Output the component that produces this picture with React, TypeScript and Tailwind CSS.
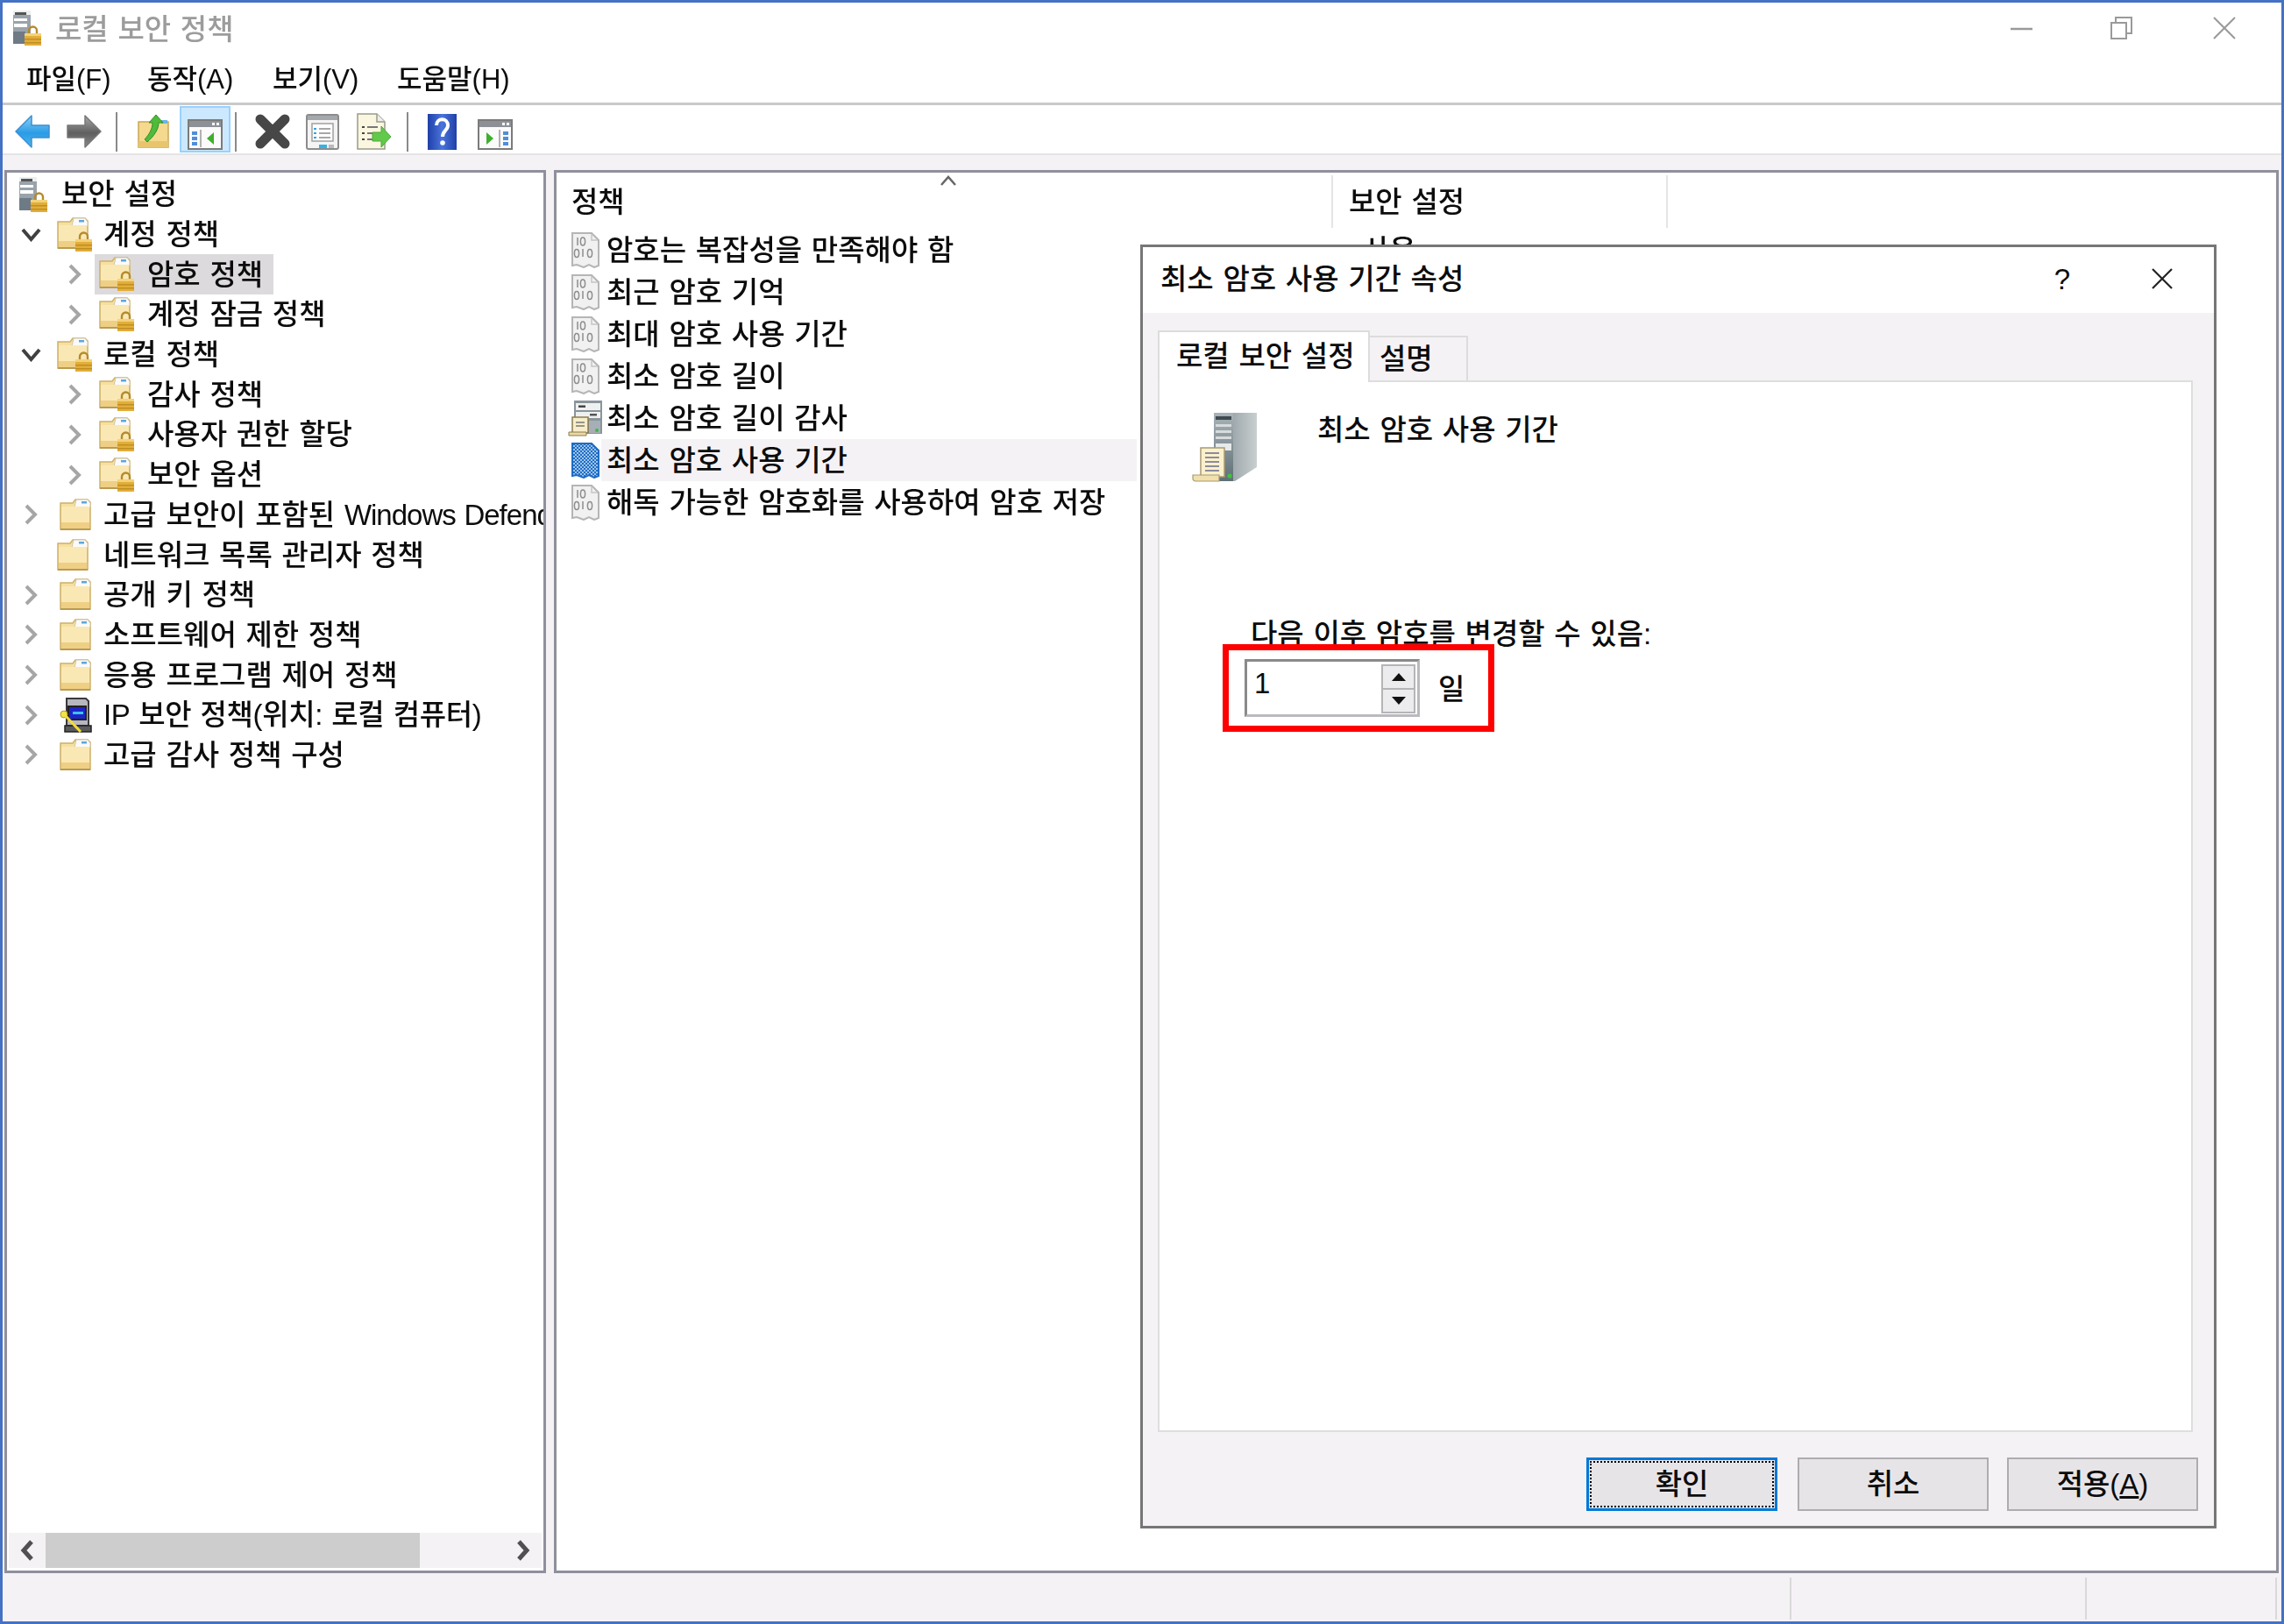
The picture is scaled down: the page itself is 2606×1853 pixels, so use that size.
import React from "react";

function GoldLock({ x, y, s = 1 }: { x: number; y: number; s?: number }) {
  return (
    <g transform={`translate(${x} ${y}) scale(${s})`}>
      <path d="M5 10V6a4.5 4.5 0 0 1 9 0v4" fill="none" stroke="#b58a2a" strokeWidth="2.4" />
      <rect x="0" y="9" width="19" height="14" fill="#e2ae3a" />
      <rect x="0" y="9" width="19" height="3" fill="#f4d27a" />
      <rect x="0" y="15" width="19" height="1.5" fill="#c08d22" />
      <rect x="0" y="19" width="19" height="1.5" fill="#c08d22" />
    </g>
  );
}

function ServerLock() {
  return (
    <svg width="34" height="40" viewBox="0 0 34 40" className="shrink-0">
      <rect x="1" y="0" width="20" height="38" fill="#9aa3ab" />
      <rect x="1" y="0" width="20" height="5" fill="#ecefef" />
      <rect x="3" y="2" width="13" height="3" fill="#555" />
      <rect x="2" y="9" width="15" height="3" fill="#fdfdfd" />
      <rect x="2" y="15" width="15" height="4" fill="#fdfdfd" />
      <rect x="1" y="24" width="14" height="14" fill="#6e7b86" />
      <GoldLock x={14} y={17} />
    </svg>
  );
}

function FolderShape() {
  return (
    <>
      <path d="M1 5h14l3-4h14l3 3v31H1z" fill="#f6e0a0" stroke="#cdb06a" strokeWidth="1.5" />
      <path d="M19 1h13l3 4v5H17z" fill="#fafafa" stroke="#cfc6a8" strokeWidth="1" />
      <rect x="25" y="3" width="6" height="2.5" fill="#5aa7e0" />
      <path d="M2 9h32v26H2z" fill="#fae8b4" />
      <path d="M2 27h32v8H2z" fill="#efcf84" />
      <path d="M1 35h34" stroke="#b89a52" strokeWidth="2" />
    </>
  );
}

function Folder() {
  return (
    <svg width="36" height="37" viewBox="0 0 36 37" className="shrink-0">
      <FolderShape />
    </svg>
  );
}

function FolderLock() {
  return (
    <svg width="41" height="40" viewBox="0 0 41 40" className="shrink-0">
      <FolderShape />
      <GoldLock x={21} y={16} />
    </svg>
  );
}

function BinaryDoc({ active }: { active?: boolean }) {
  const id = "dots";
  return (
    <svg width="36" height="42" viewBox="0 0 36 42" className="shrink-0">
      <defs>
        <pattern id={id} width="4" height="4" patternUnits="userSpaceOnUse">
          <rect width="4" height="4" fill="#1f6cc4" />
          <rect width="2" height="2" fill="#9cc4ec" />
          <rect x="2" y="2" width="2" height="2" fill="#9cc4ec" />
        </pattern>
      </defs>
      <path
        d="M3 2h22l8 8v29l-5 2-6-3-6 3-8-3-5 1z"
        fill={active ? `url(#${id})` : "#f1f1f1"}
        stroke={active ? "#1f6cc4" : "#b5b5b5"}
        strokeWidth="2"
      />
      {!active && (
        <g fill="none" stroke="#8d8d8d" strokeWidth="1.5">
          <path d="M9 7v9" />
          <ellipse cx="15" cy="11.5" rx="2.6" ry="4.5" />
          <ellipse cx="8" cy="25" rx="2.6" ry="4.5" />
          <path d="M15 20v9" />
          <ellipse cx="23" cy="25" rx="2.6" ry="4.5" />
          <path d="M25 3v7h7" stroke="#c5c5c5" />
        </g>
      )}
    </svg>
  );
}

function AuditIcon() {
  return (
    <svg width="40" height="42" viewBox="0 0 40 42" className="shrink-0">
      <rect x="7" y="1" width="32" height="38" fill="#8a949c" />
      <rect x="9" y="4" width="28" height="8" fill="#eef0f0" />
      <rect x="12" y="6.5" width="8" height="2.5" fill="#444" />
      <rect x="9" y="14" width="28" height="7" fill="#eef0f0" />
      <rect x="25" y="16" width="8" height="2.5" fill="#555" />
      <rect x="24" y="24" width="13" height="14" fill="#a6afb5" />
      <circle cx="33" cy="35" r="2" fill="#3fb648" />
      <path d="M5 20h18v18H5z" fill="#f7edc8" stroke="#8a7c4f" strokeWidth="1.5" />
      <path d="M9 26h10M9 30h10" stroke="#777" strokeWidth="1.5" />
      <path d="M1 37h20v4H1z" fill="#ead9a4" stroke="#8a7c4f" strokeWidth="1" />
    </svg>
  );
}

function IpIcon() {
  return (
    <svg width="38" height="40" viewBox="0 0 38 40" className="shrink-0">
      <path d="M8 1h22l3 3v28H8z" fill="#b7b7bf" stroke="#3a3a3a" strokeWidth="2" />
      <rect x="10" y="10" width="20" height="15" fill="#1c24c8" stroke="#222" strokeWidth="2" />
      <rect x="15" y="16" width="12" height="3" fill="#3fc0e8" />
      <path d="M6 32h30v7H6z" fill="#5a5a5a" stroke="#222" strokeWidth="1.5" />
      <circle cx="5" cy="19" r="4" fill="#f4e24a" stroke="#a89a20" />
      <path d="M7 21l17 18" stroke="#f0dc3e" strokeWidth="3" />
    </svg>
  );
}

function LargeServer() {
  return (
    <svg width="76" height="80" viewBox="0 0 76 80" className="shrink-0">
      <defs>
        <linearGradient id="srvSide" x1="0" x2="1" y1="0" y2="0">
          <stop offset="0" stopColor="#7d8a90" />
          <stop offset="1" stopColor="#c9cfd0" />
        </linearGradient>
        <linearGradient id="srvFront" x1="0" x2="0" y1="0" y2="1">
          <stop offset="0" stopColor="#a9b3b8" />
          <stop offset="1" stopColor="#5f6f76" />
        </linearGradient>
      </defs>
      <path d="M25 1h49v62L49 79H25z" fill="url(#srvSide)" />
      <rect x="25" y="1" width="22" height="78" fill="url(#srvFront)" />
      <rect x="27" y="5" width="18" height="4" fill="#3f4a50" />
      <rect x="27" y="14" width="18" height="3" fill="#d6dbdc" />
      <rect x="27" y="21" width="18" height="3" fill="#d6dbdc" />
      <rect x="27" y="28" width="18" height="3" fill="#d6dbdc" />
      <rect x="27" y="36" width="18" height="8" fill="#e7eaea" />
      <circle cx="43" cy="73" r="2.6" fill="#41c23f" />
      <path d="M10 41h27v33H10z" fill="#faf0cc" stroke="#a89a72" strokeWidth="1.5" />
      <path d="M15 47h16M15 52h16M15 57h16M15 62h16M15 67h16" stroke="#8c8c9a" strokeWidth="2" />
      <path d="M1 72h30v7H4a3 3 0 0 1-3-3z" fill="#efe0ad" stroke="#a89a72" strokeWidth="1.2" />
    </svg>
  );
}

function ArrowBack() {
  return (
    <svg width="40" height="38" viewBox="0 0 40 38" className="shrink-0">
      <defs>
        <linearGradient id="blueArrow" x1="0" x2="0" y1="0" y2="1">
          <stop offset="0" stopColor="#8fd0f5" />
          <stop offset="0.55" stopColor="#2a9ce6" />
          <stop offset="1" stopColor="#4fb4ee" />
        </linearGradient>
      </defs>
      <path d="M1 19L19 1v11h20v14H19v11z" fill="url(#blueArrow)" stroke="#3d8fd0" strokeWidth="1.5" strokeLinejoin="round" />
    </svg>
  );
}

function ArrowForward() {
  return (
    <svg width="41" height="38" viewBox="0 0 41 38" className="shrink-0">
      <defs>
        <linearGradient id="grayArrow" x1="0" x2="0" y1="0" y2="1">
          <stop offset="0" stopColor="#a9a9a9" />
          <stop offset="0.55" stopColor="#5f5f5f" />
          <stop offset="1" stopColor="#8a8a8a" />
        </linearGradient>
      </defs>
      <path d="M40 19L22 1v11H2v14h20v11z" fill="url(#grayArrow)" stroke="#777" strokeWidth="1.5" strokeLinejoin="round" />
    </svg>
  );
}

function UpFolder() {
  return (
    <svg width="36" height="38" viewBox="0 0 36 38" className="shrink-0">
      <path d="M1 8h34v29H1z" fill="#f5d98e" stroke="#c9a757" strokeWidth="1.5" />
      <path d="M1 30h34v7H1z" fill="#e8c46c" />
      <path d="M27 6h7v4h-7z" fill="#6eb3e4" />
      <path d="M21 0l8 9h-5c0 8-6 16-13 22l-3-3c5-5 9-12 9-19h-4z" fill="#4fbb3c" stroke="#2f8f27" strokeWidth="1" />
    </svg>
  );
}

function PaneIcon({ flip }: { flip?: boolean }) {
  return (
    <svg width="40" height="35" viewBox="0 0 40 35" className="shrink-0">
      <rect x="1" y="1" width="38" height="33" fill="#fbfbfb" stroke="#7b7b7b" strokeWidth="2" />
      <rect x="2" y="2" width="36" height="7" fill="#8d9197" />
      <rect x="28" y="4" width="3" height="3" fill="#fff" />
      <rect x="33" y="4" width="3" height="3" fill="#fff" />
      {flip ? (
        <>
          <path d="M25 12v20" stroke="#9a9a9a" strokeWidth="1.5" />
          <path d="M10 15l8 7-8 7z" fill="#3fae2e" />
          <path d="M29 14h6v4h-6zM29 20h6v4h-6zM29 26h6v4h-6z" fill="#4f8fd8" />
        </>
      ) : (
        <>
          <path d="M15 12v20" stroke="#9a9a9a" strokeWidth="1.5" />
          <path d="M5 14h6v4H5zM5 20h6v4H5zM5 26h6v4H5z" fill="#4f8fd8" />
          <path d="M30 15l-8 7 8 7z" fill="#3fae2e" />
        </>
      )}
    </svg>
  );
}

function BigX() {
  return (
    <svg width="42" height="42" viewBox="0 0 42 42" className="shrink-0">
      <path d="M7 7l28 28M35 7L7 35" stroke="#474747" strokeWidth="11" strokeLinecap="round" />
    </svg>
  );
}

function PropsIcon() {
  return (
    <svg width="38" height="41" viewBox="0 0 38 41" className="shrink-0">
      <rect x="1" y="1" width="36" height="39" rx="2" fill="#f4f4f4" stroke="#8c8c8c" strokeWidth="2" />
      <rect x="2" y="2" width="34" height="5" fill="#a4a8ad" />
      <rect x="7" y="11" width="24" height="20" fill="#fff" stroke="#a0a0a0" strokeWidth="1.5" />
      <path d="M9 17h3M9 22h3M9 27h3" stroke="#2fa4e6" strokeWidth="2" />
      <path d="M15 17h13M15 22h13M15 27h13" stroke="#8a8a8a" strokeWidth="1.5" />
      <rect x="15" y="35" width="9" height="4" fill="#32b3e8" />
      <rect x="26" y="35" width="6" height="4" fill="#bbbbbb" />
    </svg>
  );
}

function ExportIcon() {
  return (
    <svg width="40" height="42" viewBox="0 0 40 42" className="shrink-0">
      <path d="M1 1h22l9 9v31H1z" fill="#fbf6df" stroke="#9a9a8a" strokeWidth="1.5" />
      <path d="M23 1v9h9" fill="#eee" stroke="#9a9a8a" strokeWidth="1.5" />
      <path d="M6 16h3M6 23h3M6 30h3" stroke="#444" strokeWidth="2" />
      <path d="M12 16h12M12 23h10M12 30h10" stroke="#777" strokeWidth="2" />
      <path d="M39 27L28 15v7H18v10h10v7z" fill="#62c94a" stroke="#4aa93a" strokeWidth="1" />
    </svg>
  );
}

function HelpIcon() {
  return (
    <svg width="33" height="41" viewBox="0 0 33 41" className="shrink-0">
      <defs>
        <linearGradient id="helpBlue" x1="0" x2="1" y1="0" y2="0">
          <stop offset="0" stopColor="#1f3fa8" />
          <stop offset="0.5" stopColor="#4a74dc" />
          <stop offset="1" stopColor="#1f3fa8" />
        </linearGradient>
      </defs>
      <rect width="33" height="41" fill="url(#helpBlue)" />
      <path d="M10 13c0-9 13-9 13 0 0 6-6 6-6 13" fill="none" stroke="#fff" strokeWidth="4" />
      <circle cx="17" cy="33" r="2.8" fill="#fff" />
    </svg>
  );
}

function Chevron({ dir, dark }: { dir: "right" | "down"; dark?: boolean }) {
  if (dir === "down") {
    return (
      <svg width="23" height="16" viewBox="0 0 23 16" className="shrink-0">
        <path d="M2 2l9.5 11L21 2" fill="none" stroke="#404040" strokeWidth="4" />
      </svg>
    );
  }
  return (
    <svg width="15" height="24" viewBox="0 0 15 24" className="shrink-0">
      <path d="M2 2l10 10L2 22" fill="none" stroke={dark ? "#4d4d4d" : "#a6a6a6"} strokeWidth="4" />
    </svg>
  );
}

const L1 = ({ open, lock, label, none, ip }: { open?: boolean; lock?: boolean; label: React.ReactNode; none?: boolean; ip?: boolean }) => (
  <div className="flex h-[45.7px] shrink-0 items-center pl-[16px]">
    <div className="flex w-[23px] shrink-0 justify-center">
      {none ? null : open ? <Chevron dir="down" /> : <Chevron dir="right" />}
    </div>
    <div className={none ? "ml-[18px] flex w-[53px] shrink-0" : lock ? "ml-[18px] flex w-[53px] shrink-0" : "ml-[21px] flex w-[50px] shrink-0"}>
      {lock ? <FolderLock /> : ip ? <IpIcon /> : <Folder />}
    </div>
    <span>{label}</span>
  </div>
);

const L2 = ({ label, selected }: { label: string; selected?: boolean }) => (
  <div className="flex h-[45.7px] shrink-0 items-center pl-[70px]">
    <div className="flex w-[30px] shrink-0">
      <Chevron dir="right" />
    </div>
    <div className={selected ? "flex h-full items-center bg-[#dcdadd] pl-[5px] pr-[12px]" : "flex h-full items-center pl-[5px]"}>
      <FolderLock />
      <span className="ml-[14px]">{label}</span>
    </div>
  </div>
);

const policies = [
  { label: "암호는 복잡성을 만족해야 함" },
  { label: "최근 암호 기억" },
  { label: "최대 암호 사용 기간" },
  { label: "최소 암호 길이" },
  { label: "최소 암호 길이 감사", audit: true },
  { label: "최소 암호 사용 기간", active: true },
  { label: "해독 가능한 암호화를 사용하여 암호 저장" },
];

export default function App() {
  return (
    <div className="relative h-[1853px] w-[2606px] overflow-hidden border-[3px] border-[#4472c4] bg-white">
      <div className="relative flex h-full w-full flex-col font-['Liberation_Sans','Noto_Sans_CJK_KR',sans-serif] text-[33px] font-medium leading-none text-[#0c0c0c] blur-[0.5px] [word-spacing:1.5px]">
        {/* title bar */}
        <div className="flex h-[66px] shrink-0 items-center pb-[8px] pl-[11px]">
          <ServerLock />
          <span className="ml-[15px] mt-[2px] text-[#9c9c9c]">로컬 보안 정책</span>
          <div className="ml-auto flex items-center pr-[52px]">
            <svg width="25" height="25" viewBox="0 0 25 25"><path d="M0 13h25" stroke="#9a9a9a" strokeWidth="2.5" /></svg>
            <svg width="25" height="26" viewBox="0 0 25 26" className="ml-[89px]"><path d="M1 7h17v18H1zM6 7V1h18v18h-6" fill="none" stroke="#9a9a9a" strokeWidth="2" /></svg>
            <svg width="26" height="26" viewBox="0 0 26 26" className="ml-[92px]"><path d="M1 1l24 24M25 1L1 25" stroke="#9a9a9a" strokeWidth="2" /></svg>
          </div>
        </div>
        {/* menu bar */}
        <div className="flex h-[51px] shrink-0 items-center border-b-[3px] border-[#c9c9c9] pb-[6px] pl-[27px] text-[31px]">
          <span className="w-[138px]">파일(F)</span>
          <span className="w-[143px]">동작(A)</span>
          <span className="w-[142px]">보기(V)</span>
          <span>도움말(H)</span>
        </div>
        {/* toolbar */}
        <div className="flex h-[57px] shrink-0 items-center border-b-[2px] border-[#e4e4e4] pl-[14px] pt-[5px]">
          <ArrowBack />
          <div className="ml-[18px]"><ArrowForward /></div>
          <div className="ml-[16px] h-[45px] w-[2px] bg-[#8a8a8a]" />
          <div className="ml-[23px]"><UpFolder /></div>
          <div className="-mt-[5px] ml-[12px] flex h-[53px] w-[58px] items-center justify-center border-[2px] border-[#99d1ff] bg-[#cce8ff] pt-[12px]"><PaneIcon /></div>
          <div className="ml-[5px] h-[45px] w-[2px] bg-[#8a8a8a]" />
          <div className="ml-[20px]"><BigX /></div>
          <div className="ml-[17px]"><PropsIcon /></div>
          <div className="ml-[20px]"><ExportIcon /></div>
          <div className="ml-[17px] h-[45px] w-[2px] bg-[#8a8a8a]" />
          <div className="ml-[22px]"><HelpIcon /></div>
          <div className="ml-[24px] pt-[6px]"><PaneIcon flip /></div>
        </div>
        <div className="h-[17px] shrink-0 bg-[#f5f2f6]" />
        {/* panes */}
        <div className="flex h-[1601px] shrink-0 gap-[9px] bg-[#f5f2f6] pl-[2px] pr-[3px]">
          {/* tree */}
          <div className="flex w-[618px] shrink-0 flex-col overflow-hidden whitespace-nowrap border-[3px] border-[#8f909c] bg-white pt-[2px]">
            <div className="flex h-[45.7px] shrink-0 items-center pl-[13px]">
              <ServerLock />
              <span className="ml-[15px]">보안 설정</span>
            </div>
            <L1 open lock label="계정 정책" />
            <L2 selected label="암호 정책" />
            <L2 label="계정 잠금 정책" />
            <L1 open lock label="로컬 정책" />
            <L2 label="감사 정책" />
            <L2 label="사용자 권한 할당" />
            <L2 label="보안 옵션" />
            <L1 label={<>고급 보안이 포함된 <span className="tracking-[-1px]">Windows Defender 방화벽</span></>} />
            <L1 none label="네트워크 목록 관리자 정책" />
            <L1 label="공개 키 정책" />
            <L1 label="소프트웨어 제한 정책" />
            <L1 label="응용 프로그램 제어 정책" />
            <L1 ip label={<span className="tracking-[-0.35px]">IP 보안 정책(위치: 로컬 컴퓨터)</span>} />
            <L1 label="고급 감사 정책 구성" />
            <div className="mx-[2px] mb-[3px] mt-auto flex h-[40px] items-center bg-[#f5f2f6]">
              <div className="flex w-[42px] justify-center">
                <svg width="16" height="24" viewBox="0 0 16 24"><path d="M13 2L4 12l9 10" fill="none" stroke="#505050" strokeWidth="5" /></svg>
              </div>
              <div className="h-full w-[427px] bg-[#cdcdcd]" />
              <div className="ml-auto flex w-[42px] justify-center">
                <svg width="16" height="24" viewBox="0 0 16 24"><path d="M3 2l9 10-9 10" fill="none" stroke="#505050" strokeWidth="5" /></svg>
              </div>
            </div>
          </div>
          {/* list */}
          <div className="relative min-w-0 flex-1 overflow-hidden whitespace-nowrap border-[3px] border-[#8f909c] bg-white">
            <div className="flex h-[64px] items-stretch">
              <div className="relative mb-[1px] mt-[3px] flex w-[886px] items-center border-r-[2px] border-[#e5e5e5] pl-[17px]">
                <svg width="20" height="12" viewBox="0 0 20 12" className="absolute left-[437px] top-0"><path d="M2 11l8-9 8 9" fill="none" stroke="#666" strokeWidth="2.5" /></svg>
                <span>정책</span>
              </div>
              <div className="mb-[1px] mt-[3px] flex w-[382px] items-center border-r-[2px] border-[#e5e5e5] pl-[18px]">
                <span>보안 설정</span>
              </div>
            </div>
            <div>
              {policies.map((p, i) => (
                <div key={p.label} className="flex h-[48px] items-center pl-[15px]">
                  <div className="flex w-[36px] justify-center">
                    {p.audit ? <AuditIcon /> : <BinaryDoc active={p.active} />}
                  </div>
                  <div className={p.active ? "flex h-full w-[611px] items-center bg-[#f5f2f6] pl-[6px]" : "flex h-full w-[611px] items-center pl-[6px]"}>
                    {p.label}
                  </div>
                  {i === 0 ? <span className="ml-[258px]">사용</span> : null}
                </div>
              ))}
            </div>
          </div>
        </div>
        {/* status bar */}
        <div className="flex flex-1 bg-[#f5f2f6] pb-[2px] pt-[5px]">
          <div className="flex-1" />
          <div className="w-[337px] border-l-[2px] border-[#d9d9d9]" />
          <div className="w-[217px] border-l-[2px] border-[#d9d9d9]" />
          <div className="w-[7px] border-l-[2px] border-[#d9d9d9]" />
        </div>

        {/* dialog */}
        <div className="absolute left-[1298px] top-[276px] flex h-[1465px] w-[1228px] flex-col border-[3px] border-[#767676] bg-[#f5f2f6]">
          <div className="flex h-[75px] shrink-0 items-center bg-white pb-[3px] pl-[20px]">
            <span>최소 암호 사용 기간 속성</span>
            <div className="ml-auto flex items-center pr-[46px]">
              <span className="text-[33px]">?</span>
              <svg width="26" height="26" viewBox="0 0 26 26" className="ml-[92px]"><path d="M2 2l22 22M24 2L2 24" stroke="#222" strokeWidth="2.2" /></svg>
            </div>
          </div>
          <div className="flex shrink-0 items-start pl-[17px] pt-[20px]">
            <div className="z-10 -mb-[2px] flex h-[59px] w-[242px] items-center border-x-[2px] border-t-[2px] border-[#dcdcdc] bg-white pb-[3px] pl-[19px]">로컬 보안 설정</div>
            <div className="mt-[6px] flex h-[51px] w-[112px] items-center border-r-[2px] border-t-[2px] border-[#dcdcdc] pl-[11px]">설명</div>
          </div>
          <div className="ml-[17px] h-[1200px] w-[1181px] shrink-0 border-[2px] border-[#dedede] bg-white pt-[34px]">
            <div className="flex h-[80px] items-start pl-[37px]">
              <LargeServer />
              <span className="ml-[67px] mt-[4px]">최소 암호 사용 기간</span>
            </div>
            <div className="mt-[153px] pl-[104px]">
              <div className="flex h-[40px] items-center">다음 이후 암호를 변경할 수 있음:</div>
            </div>
            <div className="mt-[9px] flex items-center pl-[97px]">
              <div className="relative flex h-[66px] w-[200px] items-start border-[3px] border-[#b9b9c0] border-l-[#8a8a8a] border-t-[#8a8a8a]">
                <span className="ml-[8px] mt-[8px]">1</span>
                <div className="absolute right-[2px] top-[3px] flex h-[56px] w-[39px] flex-col border-[2px] border-[#b5b5b5]">
                  <div className="flex flex-1 items-center justify-center border-b-[2px] border-[#b5b5b5] bg-[#ecebed]">
                    <svg width="16" height="9" viewBox="0 0 16 9"><path d="M8 0l8 9H0z" fill="#111" /></svg>
                  </div>
                  <div className="flex flex-1 items-center justify-center bg-[#ecebed]">
                    <svg width="16" height="9" viewBox="0 0 16 9"><path d="M8 9l8-9H0z" fill="#111" /></svg>
                  </div>
                </div>
              </div>
              <span className="ml-[21px] mt-[2px]">일</span>
            </div>
          </div>
          <div className="mt-[29px] flex justify-end gap-[21px] pr-[18px]">
            <div className="mr-[2px] flex h-[61px] w-[218px] items-center justify-center border-[3px] border-[#0078d7] bg-[#e7e4e8] outline-dotted outline-2 -outline-offset-[6px] outline-black">확인</div>
            <div className="flex h-[61px] w-[218px] items-center justify-center border-[2px] border-[#adadad] bg-[#e7e4e8]">취소</div>
            <div className="flex h-[61px] w-[218px] items-center justify-center border-[2px] border-[#adadad] bg-[#e7e4e8]">
              적용(<span className="underline">A</span>)
            </div>
          </div>
        </div>
      </div>
      {/* red annotation over the dialog */}
      <div className="absolute left-[1392px] top-[732px] h-[100px] w-[310px] border-[7px] border-[#ff0000]" />
    </div>
  );
}
